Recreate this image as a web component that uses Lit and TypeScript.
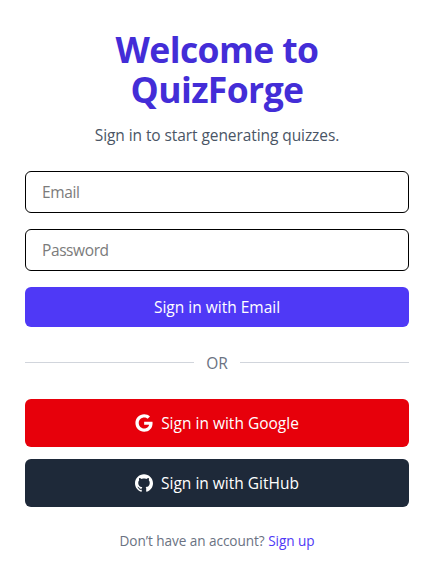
import { LitElement, html, css } from "lit";
import { customElement } from "lit/decorators.js";

@customElement("app-root")
export class AppRoot extends LitElement {
  static styles = css`
    :host { display: block; height: 579px; box-sizing: border-box; padding: 29px 26px 0 25px; background: #fff;
      font-family: "Open Sans", "Noto Sans", sans-serif; font-size: 15.5px; letter-spacing: -0.08px; line-height: 24px; color: #364153; }
    * { box-sizing: border-box; }
    h1 { margin: 0 0 14px; padding: 0 40px; text-align: center; font-size: 35.5px; letter-spacing: -0.6px; line-height: 40px; font-weight: 700; color: #432dd7; }
    .lead { margin: 0 0 24px; text-align: center; color: #4a5565; }
    input { display: block; width: 100%; height: 42px; margin: 0 0 16px; padding: 8px 16px; border: 1px solid #000; border-radius: 6px; font: inherit; letter-spacing: -0.4px; background: #fff; }
    input::placeholder { color: #7b7b7b; opacity: 1; }
    button { display: flex; align-items: center; justify-content: center; width: 100%; height: 48px; padding: 0; border: 0; border-radius: 6px; color: #fff; font: inherit; letter-spacing: 0; }
    .email { height: 40px; background: #4f39f6; }
    .or { display: flex; align-items: center; gap: 12px; margin: 24px 0; color: #6a7282; }
    .or i { flex: 1; height: 1px; margin-bottom: 2px; background: #d1d5dc; }
    .google { background: #e7000b; margin-bottom: 12px; }
    .github { background: #1e2939; }
    svg { width: 18px; height: 18px; margin-right: 8px; fill: currentColor; }
    .foot { margin: 24px 0 0; text-align: center; font-size: 13.6px; letter-spacing: -0.06px; line-height: 20px; color: #6a7282; }
    a { color: #4f39f6; text-decoration: none; }
  `;

  render() {
    return html`
      <h1>Welcome to QuizForge</h1>
      <p class="lead">Sign in to start generating quizzes.</p>
      <input type="email" placeholder="Email" />
      <input type="password" placeholder="Password" />
      <button class="email"><span>Sign in with Email</span></button>
      <div class="or"><i></i><span>OR</span><i></i></div>
      <button class="google">
        <svg viewBox="0 0 488 512"><path d="M488 261.8C488 403.3 391.1 504 248 504 110.8 504 0 393.2 0 256S110.8 8 248 8c66.8 0 123 24.5 166.3 64.900l-67.500 64.900C258.500 52.600 94.300 116.600 94.300 256c0 86.500 69.100 156.600 153.700 156.600 98.200 0 135-70.400 140.800-106.900H248v-85.300h236.100c2.300 12.700 3.900 24.900 3.900 41.400z"/></svg>
        <span>Sign in with Google</span>
      </button>
      <button class="github">
        <svg viewBox="0 0 24 24"><path d="M12 .297c-6.630 0-12 5.373-12 12 0 5.303 3.438 9.800 8.205 11.385.6.113.82-.258.82-.577 0-.285-.01-1.040-.015-2.040-3.338.724-4.042-1.610-4.042-1.610C4.422 18.070 3.633 17.700 3.633 17.700c-1.087-.744.084-.729.084-.729 1.205.084 1.838 1.236 1.838 1.236 1.070 1.835 2.809 1.305 3.495.998.108-.776.417-1.305.76-1.605-2.665-.3-5.466-1.332-5.466-5.930 0-1.310.465-2.380 1.235-3.220-.135-.303-.54-1.523.105-3.176 0 0 1.005-.322 3.300 1.230.96-.267 1.980-.399 3-.405 1.020.006 2.040.138 3 .405 2.280-1.552 3.285-1.230 3.285-1.230.645 1.653.24 2.873.12 3.176.765.840 1.230 1.910 1.230 3.220 0 4.610-2.805 5.625-5.475 5.920.42.360.81 1.096.81 2.220 0 1.606-.015 2.896-.015 3.286 0 .315.21.690.825.570C20.565 22.092 24 17.592 24 12.297c0-6.627-5.373-12-12-12"/></svg>
        <span>Sign in with GitHub</span>
      </button>
      <p class="foot"><span>Don’t have an account?</span> <a>Sign up</a></p>
    `;
  }
}
